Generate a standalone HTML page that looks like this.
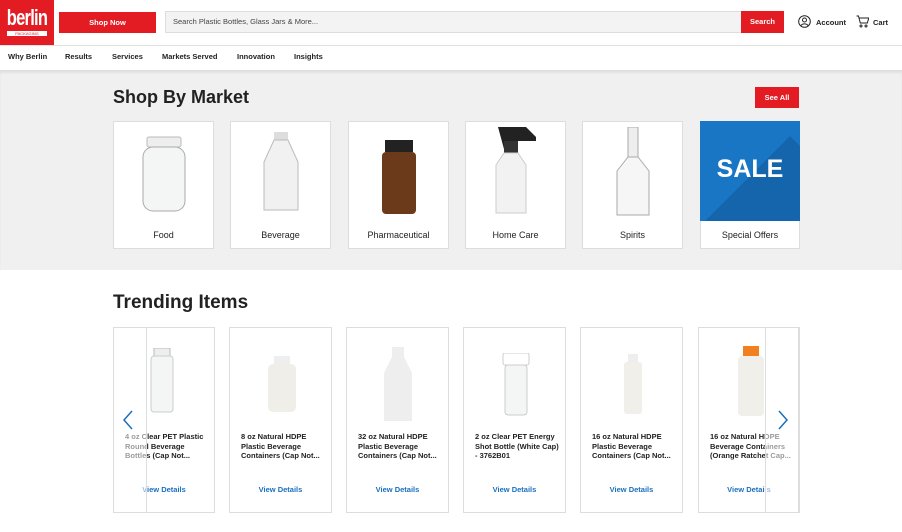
<!DOCTYPE html><html><head><style>
*{box-sizing:border-box;margin:0;padding:0}
body{width:902px;height:532px;overflow:hidden;font-family:"Liberation Sans",sans-serif;background:#fff;position:relative;color:#222}
.a{position:absolute}
.card{position:absolute;background:#fff;border:1px solid #ddd}
.mk{top:121px;width:101px;height:128px;font-size:9px;text-align:center}
.mk span{position:absolute;left:0;right:0;top:108px}
.tr{top:327px;width:103px;height:186px}
.tr .t{position:absolute;left:11px;top:104px;font-size:7.5px;font-weight:bold;line-height:9.6px;width:85px;color:#222}
.tr .v{position:absolute;left:0;right:0;top:157px;text-align:center;font-size:7.5px;font-weight:bold;color:#1a6fc0}
.nav span{position:absolute;top:52px;font-size:7.5px;font-weight:bold}
</style></head><body>
<div class="a" style="left:0;top:0;width:54px;height:45px;background:#e31b23;color:#fff;text-align:center">
<div style="font:bold 22px 'Liberation Sans Narrow','Liberation Sans',sans-serif;margin-top:5px;letter-spacing:-1px;transform:scaleX(.75)">berlin</div>
<div style="font-size:4px;background:#fff;color:#e31b23;margin:0 7px;line-height:5px">PACKAGING</div></div>
<div class="a" style="left:59px;top:12px;width:97px;height:21px;background:#e31b23;color:#fff;font-size:7.5px;font-weight:bold;text-align:center;line-height:21px">Shop Now</div>
<div class="a" style="left:165px;top:11px;width:577px;height:22px;background:#f3f3f3;border:1px solid #ddd;font-size:7.5px;line-height:20px;padding-left:7px;color:#444">Search Plastic Bottles, Glass Jars &amp; More...</div>
<div class="a" style="left:741px;top:11px;width:43px;height:22px;background:#e31b23;color:#fff;font-size:7.5px;font-weight:bold;text-align:center;line-height:22px">Search</div>
<svg class="a" style="left:798px;top:15px" width="13" height="13" viewBox="0 0 13 13" fill="none" stroke="#222" stroke-width="1"><circle cx="6.5" cy="6.5" r="5.8"/><circle cx="6.5" cy="5" r="2"/><path d="M2.8 10.8c1.5-2.5 5.9-2.5 7.4 0"/></svg>
<div class="a" style="left:816px;top:18px;font-size:7.5px;font-weight:bold">Account</div>
<svg class="a" style="left:856px;top:15px" width="13" height="13" viewBox="0 0 13 13" fill="none" stroke="#222" stroke-width="1"><path d="M0.5 1h2l1.8 7h7l1.5-5H3.2"/><circle cx="5" cy="11" r="1"/><circle cx="10" cy="11" r="1"/></svg>
<div class="a" style="left:873px;top:18px;font-size:7.5px;font-weight:bold">Cart</div>
<div class="a" style="left:0;top:45px;width:902px;height:1px;background:#e2e2e2"></div>
<div class="nav"><span style="left:8px">Why Berlin</span><span style="left:65px">Results</span><span style="left:112px">Services</span><span style="left:162px">Markets Served</span><span style="left:237px">Innovation</span><span style="left:294px">Insights</span></div>
<div class="a" style="left:0;top:70px;width:902px;height:200px;background:#f0f0f0;border-top:1px solid #ddd;box-shadow:inset 0 2px 2px rgba(0,0,0,.06)"></div>
<div class="a" style="left:113px;top:87px;font-size:18px;font-weight:bold;color:#222">Shop By Market</div>
<div class="a" style="left:755px;top:87px;width:44px;height:21px;background:#e31b23;color:#fff;font-size:7.5px;font-weight:bold;text-align:center;line-height:21px">See All</div>
<div class="card mk" style="left:113px"><svg class="a" style="left:27px;top:13px" width="46" height="78"><rect x="6" y="2" width="34" height="10" rx="2" fill="#eee" stroke="#bbb"/><rect x="2" y="12" width="42" height="64" rx="10" fill="#f4f6f6" stroke="#aaa"/></svg><span>Food</span></div>
<div class="card mk" style="left:230px"><svg class="a" style="left:30px;top:10px" width="40" height="82"><rect x="13" y="0" width="14" height="8" fill="#ddd"/><path d="M13 8h14l10 22v48H3V30z" fill="#f1f1f1" stroke="#bbb"/></svg><span>Beverage</span></div>
<div class="card mk" style="left:348px"><svg class="a" style="left:32px;top:18px" width="36" height="76"><rect x="4" y="0" width="28" height="12" fill="#222"/><rect x="1" y="12" width="34" height="62" rx="4" fill="#6b3a1a"/></svg><span>Pharmaceutical</span></div>
<div class="card mk" style="left:465px"><svg class="a" style="left:24px;top:3px" width="56" height="90"><path d="M8 2h28l10 10v4H22l-8 8" fill="#222"/><rect x="14" y="16" width="14" height="12" fill="#333"/><path d="M14 28h14l8 12v48H6V40z" fill="#f2f2f2" stroke="#ccc"/></svg><span>Home Care</span></div>
<div class="card mk" style="left:582px"><svg class="a" style="left:32px;top:5px" width="36" height="90"><rect x="13" y="0" width="10" height="30" fill="#eee" stroke="#aaa"/><path d="M13 30h10l11 14v44H2V44z" fill="#f6f6f6" stroke="#aaa"/></svg><span>Spirits</span></div>
<div class="card mk" style="left:700px;width:100px"><div class="a" style="left:-1px;top:-1px;width:100px;height:100px;background:#1976c4;overflow:hidden"><div class="a" style="left:30px;top:40px;width:120px;height:120px;background:#1565ad;transform:rotate(45deg)"></div><div class="a" style="left:0;right:0;top:34px;color:#fff;font-size:25px;font-weight:bold;text-align:center">SALE</div></div><span>Special Offers</span></div>
<div class="a" style="left:113px;top:292px;font-size:19px;font-weight:bold;color:#222">Trending Items</div>
<div class="card tr" style="left:113px;width:102px"><svg class="a" style="left:35px;top:20px" width="26" height="66"><rect x="5" y="0" width="16" height="8" fill="#eee" stroke="#bbb"/><rect x="2" y="8" width="22" height="56" rx="3" fill="#f4f5f5" stroke="#ccc"/></svg><div class="t">4 oz Clear PET Plastic Round Beverage Bottles (Cap Not...</div><div class="v">View Details</div></div>
<div class="card tr" style="left:229px"><svg class="a" style="left:37px;top:28px" width="30" height="58"><rect x="7" y="0" width="16" height="8" fill="#eee"/><rect x="1" y="8" width="28" height="48" rx="5" fill="#f0eee8"/></svg><div class="t">8 oz Natural HDPE Plastic Beverage Containers (Cap Not...</div><div class="v">View Details</div></div>
<div class="card tr" style="left:346px"><svg class="a" style="left:36px;top:19px" width="30" height="76"><rect x="9" y="0" width="12" height="10" fill="#eee"/><path d="M9 10h12l8 16v48H1V26z" fill="#eee"/></svg><div class="t">32 oz Natural HDPE Plastic Beverage Containers (Cap Not...</div><div class="v">View Details</div></div>
<div class="card tr" style="left:463px"><svg class="a" style="left:38px;top:25px" width="28" height="64"><rect x="1" y="0" width="26" height="12" rx="2" fill="#fff" stroke="#ccc"/><rect x="3" y="12" width="22" height="50" rx="3" fill="#f4f5f5" stroke="#ccc"/></svg><div class="t">2 oz Clear PET Energy Shot Bottle (White Cap) - 3762B01</div><div class="v">View Details</div></div>
<div class="card tr" style="left:580px"><svg class="a" style="left:42px;top:26px" width="20" height="62"><rect x="5" y="0" width="10" height="8" fill="#eee"/><rect x="1" y="8" width="18" height="52" rx="3" fill="#f1efe9"/></svg><div class="t">16 oz Natural HDPE Plastic Beverage Containers (Cap Not...</div><div class="v">View Details</div></div>
<div class="card tr" style="left:698px;width:102px"><svg class="a" style="left:38px;top:18px" width="28" height="72"><rect x="6" y="0" width="16" height="10" fill="#f08020"/><rect x="1" y="10" width="26" height="60" rx="4" fill="#f1efe9"/></svg><div class="t">16 oz Natural HDPE Beverage Containers (Orange Ratchet Cap...</div><div class="v">View Details</div></div>
<div class="a" style="left:113px;top:327px;width:34px;height:186px;background:rgba(255,255,255,.55);border:1px solid #ddd"></div>
<div class="a" style="left:765px;top:327px;width:34px;height:186px;background:rgba(255,255,255,.55);border:1px solid #ddd"></div>
<svg class="a" style="left:122px;top:410px" width="12" height="20" fill="none" stroke="#1a6fc0" stroke-width="1.5"><path d="M10 1L2 10l8 9"/></svg>
<svg class="a" style="left:777px;top:410px" width="12" height="20" fill="none" stroke="#1a6fc0" stroke-width="1.5"><path d="M2 1l8 9-8 9"/></svg>
</body></html>
